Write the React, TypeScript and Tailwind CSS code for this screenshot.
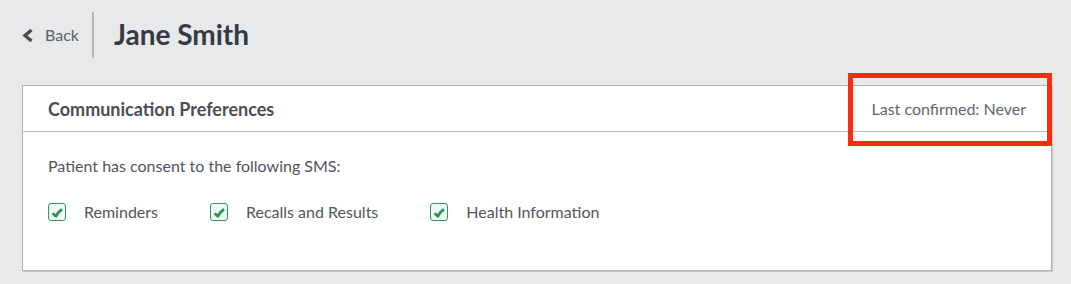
import React from 'react';

const channels = ['Reminders', 'Recalls and Results', 'Health Information'];

function Check() {
  return (
    <span className="flex h-[18px] w-[18px] items-center justify-center rounded-[3px] border border-[#2f9a5c] bg-[#f1f7f3]">
      <svg className="mt-[1px] h-[10px] w-[12px]" viewBox="0 0 12 10" fill="none">
        <path d="M1.6 5.2L4.9 8.2C6.6 5 8.6 2.6 11 1.2" stroke="#1f9a52" strokeWidth="2.8" strokeLinejoin="round" />
      </svg>
    </span>
  );
}

export default function App() {
  return (
    <div className="h-[284px] w-[1071px] overflow-hidden bg-[#e8e9eb] font-['Lato',sans-serif]">
      {/* Top bar */}
      <div className="flex h-[70px] items-center">
        <div className="flex items-center pl-[22px] pr-[13px] text-[16px] text-[#5b5e66]">
          <svg className="mr-[11px] h-[15px] w-[12px] shrink-0" viewBox="0 0 12 15" fill="none">
            <path d="M9.5 2L3 7.5L9.5 13" stroke="#4a4d55" strokeWidth="3.4" strokeLinejoin="miter" />
          </svg>
          Back
        </div>
        <div className="h-[46px] w-[2px] bg-[#b4b6ba]" />
        <h1 className="ml-[20px] pb-[2px] text-[28px] font-bold text-[#363a44]">Jane Smith</h1>
      </div>

      {/* Card */}
      <div className="relative ml-[22px] mr-[19px] mt-[15px] h-[186px] border border-[#adb0b5] bg-white shadow-[1px_1px_0_#c5c7cb]">
        <div className="flex h-[46px] items-center justify-between border-b border-[#b9bbc0] pl-[25px] pr-[25px]">
          <h2 className="pt-[1px] text-[18px] font-bold text-[#4a4d56]">Communication Preferences</h2>
          <span className="text-[16px] text-[#62656d]">Last confirmed: Never</span>
        </div>
        <div className="px-[25px] pt-[22px]">
          <p className="text-[16px] text-[#52555d]">Patient has consent to the following SMS:</p>
          <div className="mt-[22px] flex items-center">
            {channels.map((c) => (
              <div key={c} className="mr-[52px] flex items-center">
                <Check />
                <span className="ml-[18px] text-[16px] text-[#52555d]">{c}</span>
              </div>
            ))}
          </div>
        </div>
        <div className="absolute right-[-1px] top-[-13px] h-[73px] w-[204px] border-[5px] border-[#ff2a10]" />
      </div>
    </div>
  );
}
